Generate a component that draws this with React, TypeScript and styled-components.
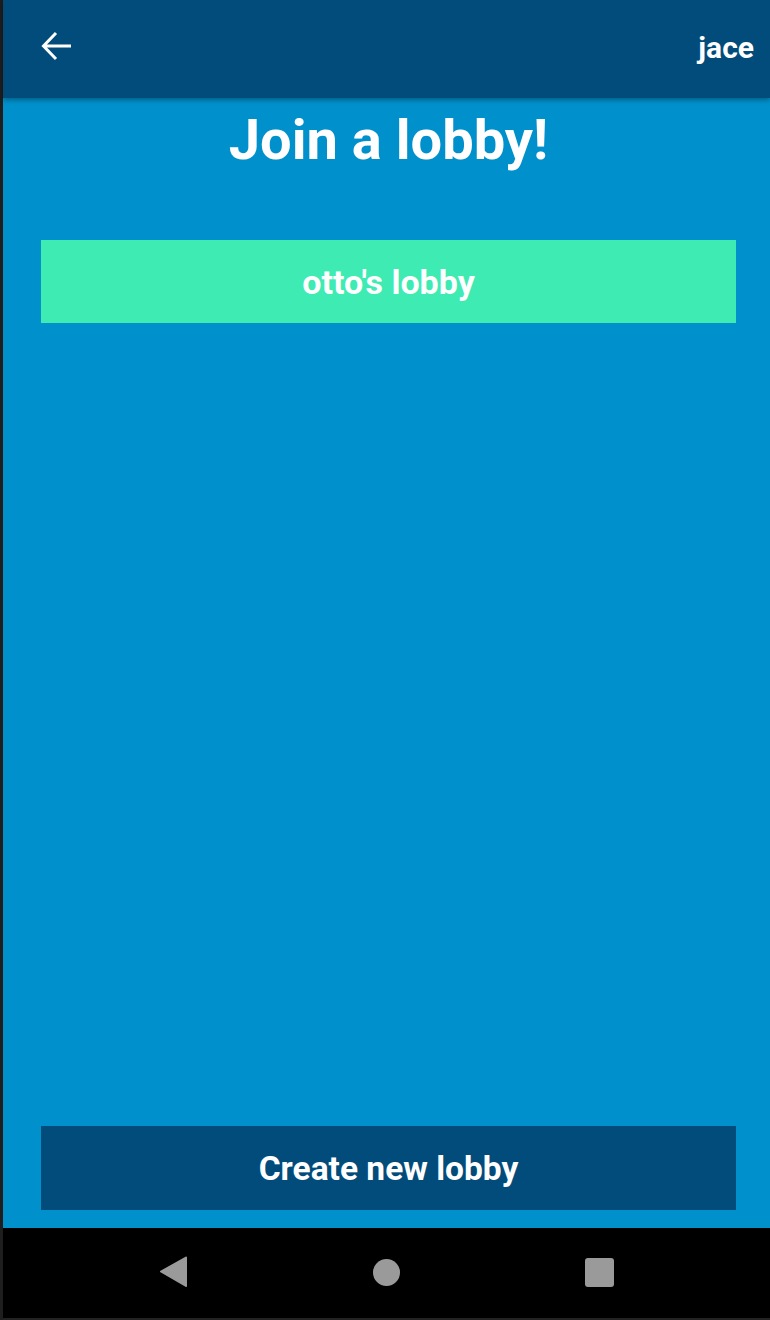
import React from "react";
import styled, { createGlobalStyle } from "styled-components";

const Global = createGlobalStyle`
  html, body { margin: 0; padding: 0; background: #1c1c1c; }
  body { font-family: Roboto, "Noto Sans", sans-serif; }
`;

const Frame = styled.div`
  width: 770px;
  height: 1320px;
  display: flex;
  background: #1c1c1c;
`;

const Edge = styled.div`
  width: 3px;
  flex: none;
  background: #1e1e1e;
`;

const Phone = styled.div`
  flex: 1;
  display: flex;
  flex-direction: column;
  background: #0091cc;
`;

const Header = styled.header`
  height: 98px;
  flex: none;
  background: #024c7b;
  display: flex;
  align-items: center;
  justify-content: space-between;
  padding: 0 16px 0 37px;
  box-shadow: 0 2px 5px rgba(0, 0, 0, 0.35);
  position: relative;
  z-index: 1;
`;

const BackButton = styled.button`
  border: 0;
  background: none;
  padding: 0;
  width: 32px;
  height: 32px;
  display: flex;
  align-items: center;
  justify-content: center;
  margin-top: -6px;
`;

const UserName = styled.span`
  color: #fff;
  font-weight: 700;
  font-size: 30px;
  margin-top: -4px;
`;

const Content = styled.main`
  flex: 1;
  display: flex;
  flex-direction: column;
  padding: 0 34px 18px 38px;
`;

const Title = styled.h1`
  margin: 10px 0 0;
  color: #fff;
  font-weight: 700;
  font-size: 56px;
  line-height: 64px;
  text-align: center;
`;

const LobbyList = styled.div`
  margin-top: 68px;
  flex: 1;
  display: flex;
  flex-direction: column;
  gap: 16px;
`;

const Block = styled.button<{ $bg: string; $size: number; $h: number }>`
  border: 0;
  width: 100%;
  height: ${(p) => p.$h}px;
  background: ${(p) => p.$bg};
  color: #fff;
  font-family: Roboto, "Noto Sans", sans-serif;
  font-weight: 700;
  font-size: ${(p) => p.$size}px;
  display: flex;
  align-items: center;
  justify-content: center;
  padding: 0;
`;

const NavBar = styled.nav`
  height: 92px;
  flex: none;
  background: #000;
  display: flex;
  align-items: center;
  justify-content: center;
  border-bottom: 2px solid #222;
  box-sizing: border-box;
`;

const NavSlot = styled.div`
  width: 213px;
  display: flex;
  justify-content: center;
  padding-bottom: 2px;
`;

const NavCircle = styled.div`
  width: 27px;
  height: 27px;
  border-radius: 50%;
  background: #9a9a9a;
`;

const NavSquare = styled.div`
  width: 29px;
  height: 29px;
  border-radius: 3px;
  background: #9a9a9a;
`;

export default function App() {
  return (
    <>
      <Global />
      <Frame>
        <Edge />
        <Phone>
          <Header>
            <BackButton aria-label="back">
              <svg width="32" height="32" viewBox="0 0 32 32">
                <path
                  d="M31 16H4M16 3L3.5 16L16 29"
                  stroke="#fff"
                  strokeWidth="3"
                  fill="none"
                />
              </svg>
            </BackButton>
            <UserName>jace</UserName>
          </Header>
          <Content>
            <Title>Join a lobby!</Title>
            <LobbyList>
              <Block $bg="#3debb3" $size={34} $h={83}>otto's lobby</Block>
            </LobbyList>
            <Block $bg="#024c7b" $size={33.5} $h={84}>Create new lobby</Block>
          </Content>
          <NavBar>
            <NavSlot>
              <svg width="28" height="32" viewBox="0 0 28 32">
                <path d="M26 1.5 L1 15.5 L26 30 Z" fill="#9a9a9a" strokeLinejoin="round" stroke="#9a9a9a" strokeWidth="2" />
              </svg>
            </NavSlot>
            <NavSlot>
              <NavCircle />
            </NavSlot>
            <NavSlot>
              <NavSquare />
            </NavSlot>
          </NavBar>
        </Phone>
      </Frame>
    </>
  );
}
